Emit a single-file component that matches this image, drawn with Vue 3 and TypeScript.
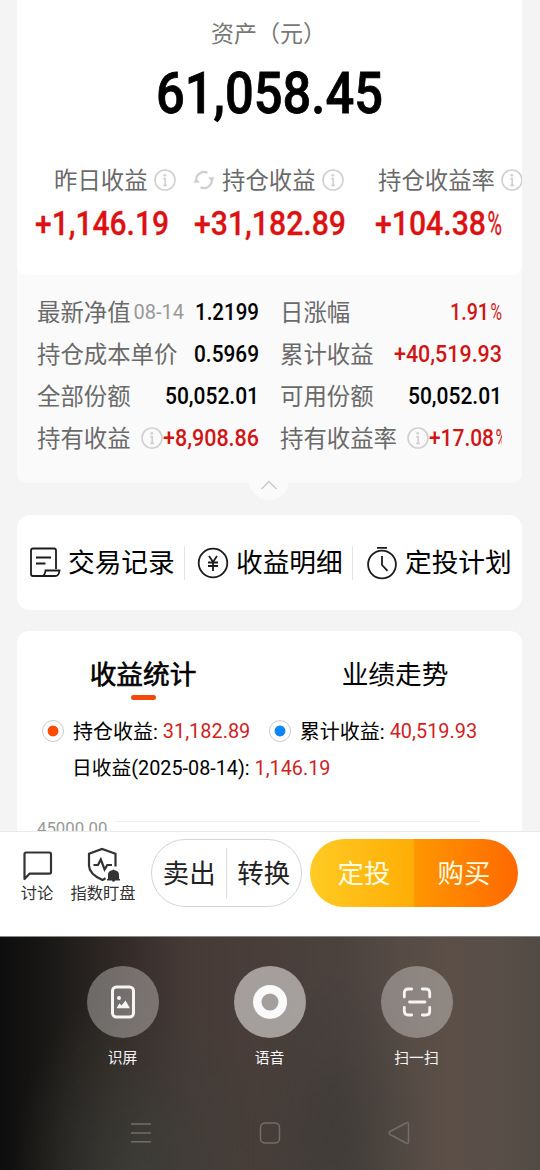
<script setup lang="ts">
import { h, type FunctionalComponent } from 'vue'

interface FigureProps {
  text: string
  w: number
  size: number
  pct?: number
}

// Condensed figure: digits are fitted to a fixed width, with an optional narrow percent sign.
const Figure: FunctionalComponent<FigureProps> = (p) => {
  const pct = p.pct ?? 0
  const height = Math.round(p.size * 1.1)
  const y = p.size * 0.82 + 1
  const parts = [
    h('text', { x: 0, y, textLength: p.w - (pct ? 1 : 0), lengthAdjust: 'spacingAndGlyphs' }, p.text),
  ]
  if (pct) {
    parts.push(
      h('text', { x: p.w + 0.5, y, textLength: pct - 0.5, lengthAdjust: 'spacingAndGlyphs', 'font-weight': 400 }, '%'),
    )
  }
  return h('svg', { width: p.w + pct, height, 'font-size': p.size, 'font-weight': 500 }, parts)
}
Figure.props = ['text', 'w', 'size', 'pct']

const InfoIcon: FunctionalComponent = () =>
  h('svg', { width: 22, height: 22, viewBox: '0 0 22 22', fill: 'none', stroke: '#d0d0d0' }, [
    h('circle', { cx: 11, cy: 11, r: 10, 'stroke-width': 1.6 }),
    h('path', { d: 'M9.4 9.6h1.8v6.900M9.2 16.300h3.800', 'stroke-width': 1.7 }),
    h('circle', { cx: 10.8, cy: 6.3, r: 1.4, fill: '#d0d0d0', stroke: 'none' }),
  ])

interface Detail {
  label: string
  date?: string
  info?: boolean
  red?: boolean
  text: string
  w: number
  pct?: number
}

const stats = [
  { cls: 'first', label: '昨日收益', text: '+1,146.19', w: 134, pct: 0 },
  { cls: 'second', label: '持仓收益', text: '+31,182.89', w: 152, pct: 0, refresh: true },
  { cls: 'third', label: '持仓收益率', text: '+104.38', w: 112, pct: 15 },
]

const details: Detail[] = [
  { label: '最新净值', date: '08-14', text: '1.2199', w: 64 },
  { label: '日涨幅', text: '1.91', w: 40, pct: 12, red: true },
  { label: '持仓成本单价', text: '0.5969', w: 65 },
  { label: '累计收益', text: '+40,519.93', w: 108, red: true },
  { label: '全部份额', text: '50,052.01', w: 94 },
  { label: '可用份额', text: '50,052.01', w: 94 },
  { label: '持有收益', text: '+8,908.86', w: 96, red: true, info: true },
  { label: '持有收益率', text: '+17.08', w: 66, pct: 12, red: true, info: true },
]
</script>

<template>
  <div class="screen">
    <main class="content">
      <section class="asset">
        <div class="summary">
          <div class="asset-title">资产（元）</div>
          <Figure class="total" text="61,058.45" :w="227" :size="57" />
          <div class="stats">
            <div v-for="s in stats" :key="s.label" class="stat" :class="s.cls">
              <div class="stat-label">
                <svg v-if="s.refresh" class="refresh" width="22" height="20" viewBox="0 0 22 20">
                  <path d="M3.3 11.5A8 8 0 0 1 14.5 2.7M18.7 8.5A8 8 0 0 1 7.5 17.3" fill="none" stroke="#cfcfcf" stroke-width="2.2" />
                  <path d="M0 12.4 3.4 8.4 7 12.8ZM15 7.2 22 7.6 18.6 11.6Z" fill="#cfcfcf" />
                </svg>
                <span>{{ s.label }}</span>
                <InfoIcon class="info" />
              </div>
              <Figure class="stat-value" :text="s.text" :w="s.w" :pct="s.pct" :size="34" />
            </div>
          </div>
        </div>
        <div class="details">
          <div v-for="d in details" :key="d.label" class="detail">
            <span class="detail-label">{{ d.label }}</span>
            <span v-if="d.date" class="date">{{ d.date }}</span>
            <InfoIcon v-if="d.info" class="detail-info" />
            <Figure class="detail-value" :class="{ red: d.red, tight: d.info }" :text="d.text" :w="d.w" :pct="d.pct" :size="23" />
          </div>
        </div>
        <div class="collapse">
          <svg width="18" height="10" viewBox="0 0 18 10"><path d="M1.5 9 9 1.5 16.5 9" fill="none" stroke="#c8c8c8" stroke-width="1.400" /></svg>
        </div>
      </section>

      <nav class="links">
        <div class="link l1">
          <svg width="32" height="32" viewBox="0 0 32 32" fill="none" stroke="#1c1c1c" stroke-width="1.8">
            <path d="M27 22V3.500Q27 1.500 25 1.500H4Q2 1.500 2 3.500V27Q2 29 4 29H26Q30 29 30.500 23.500H16.500Q16 29 12.500 29" />
            <path d="M7 10.500h15M7 16.500h9.500" />
          </svg>
          <span>交易记录</span>
        </div>
        <div class="link l2">
          <svg width="32" height="32" viewBox="0 0 32 32" fill="none" stroke="#1c1c1c" stroke-width="1.8">
            <circle cx="16" cy="16" r="14.300" />
            <path d="M12 9 16 15 20 9M16 15V24M11 15.500h10M11 19h10" stroke-width="1.800" />
          </svg>
          <span>收益明细</span>
        </div>
        <div class="link l3">
          <svg width="32" height="34" viewBox="0 0 32 34" fill="none" stroke="#1c1c1c" stroke-width="1.800">
            <circle cx="16" cy="18.500" r="13.900" />
            <path d="M11 1.800h10M16 10V19L21.500 24.800" />
          </svg>
          <span>定投计划</span>
        </div>
      </nav>

      <section class="chart">
        <div class="tabs">
          <div class="tab active">收益统计</div>
          <div class="tab">业绩走势</div>
        </div>
        <div class="legend">
          <span class="radio orange"></span>
          <span class="name">持仓收益:</span>
          <span class="num">31,182.89</span>
          <span class="radio blue"></span>
          <span class="name">累计收益:</span>
          <span class="num">40,519.93</span>
        </div>
        <div class="daily">日收益(2025-08-14): <span class="num">1,146.19</span></div>
        <div class="axis"><span>45000.00</span><i></i></div>
      </section>
    </main>

    <footer class="actions">
      <div class="tool discuss">
        <svg width="32" height="32" viewBox="0 0 32 32" fill="none" stroke="#333" stroke-width="2.200">
          <path d="M3.500 30V5.200Q3.500 3.500 5.200 3.500H28.300Q30 3.500 30 5.200V23Q30 24.700 28.300 24.700H8.500Z" stroke-linejoin="round" />
        </svg>
        <span>讨论</span>
      </div>
      <div class="tool watch">
        <svg width="34" height="36" viewBox="0 0 34 36" fill="none" stroke="#333" stroke-width="2.200">
          <path d="M29.500 19.500V6.800L16 2 3 6.800V18.500Q3 27 16.500 33L19.500 31.300" />
          <path d="M7.500 18H12L14.800 12.500 18.600 22.500 21.300 18H26" stroke-width="2.200" />
          <path d="M22 32V28Q22 23.800 26.300 23.300Q27.500 21.500 28.700 23.300Q33 23.800 33 28V32H34V33.500H29.200Q27.500 36 25.800 33.500H21V32Z" fill="#333" stroke="none" />
        </svg>
        <span>指数盯盘</span>
      </div>
      <div class="pill outline">
        <span>卖出</span><i></i><span>转换</span>
      </div>
      <div class="pill solid">
        <span class="invest">定投</span><span class="buy">购买</span>
      </div>
    </footer>

    <aside class="assistant">
      <div class="shortcuts">
        <div class="shortcut">
          <div class="disc">
            <svg width="26" height="34" viewBox="0 0 26 34">
              <rect x="2.500" y="2" width="21" height="30" rx="4" fill="none" stroke="#f5f5f5" stroke-width="3" />
              <circle cx="9" cy="13" r="2" fill="#f5f5f5" />
              <path d="M6.500 23.300 9.500 18.300 11.500 20.500 15.500 15.500 20 23.300Z" fill="#f5f5f5" />
            </svg>
          </div>
          <span>识屏</span>
        </div>
        <div class="shortcut">
          <div class="disc bright">
            <svg width="36" height="36" viewBox="0 0 36 36"><circle cx="18" cy="18" r="12.800" fill="none" stroke="#fafafa" stroke-width="8.500" /></svg>
          </div>
          <span>语音</span>
        </div>
        <div class="shortcut">
          <div class="disc">
            <svg width="30" height="30" viewBox="0 0 30 30" fill="none" stroke="#f5f5f5" stroke-width="2.800" stroke-linecap="round">
              <path d="M2.300 10V5.800Q2.300 2 6.100 2H9.700M20.300 2H23.900Q27.700 2 27.700 5.800V10M27.700 20.500V24.200Q27.700 28 23.900 28H20.300M9.700 28H6.100Q2.300 28 2.300 24.200V20.500M7.500 15H23" />
            </svg>
          </div>
          <span>扫一扫</span>
        </div>
      </div>
      <div class="system">
        <svg width="22" height="22" viewBox="0 0 22 22"><path d="M1 2h20M1 11h20M1 19.800h20" /></svg>
        <svg width="22" height="22" viewBox="0 0 22 22"><rect x="1.500" y="1" width="19" height="20" rx="4.500" /></svg>
        <svg width="24" height="24" viewBox="0 0 24 24"><path d="M19 2Q21.500 0.700 21.500 3.500V20.500Q21.500 23.300 19 22L3 13.500Q1 12 3 10.500Z" /></svg>
      </div>
    </aside>
  </div>
</template>

<style>
body {
  margin: 0;
}
</style>

<style scoped>
.screen {
  width: 540px;
  height: 1170px;
  overflow: hidden;
  background: #f4f4f4;
  display: flex;
  flex-direction: column;
  font-family: Roboto, 'Noto Sans CJK SC', sans-serif;
  color: #000;
}
svg {
  display: block;
  flex: none;
}
.screen span {
  white-space: nowrap;
}
.content {
  height: 831px;
  flex: none;
  overflow: hidden;
  padding: 0 18px 0 17px;
}
.asset {
  height: 483px;
  background: #fafafa;
  border-radius: 0 0 10px 10px;
  position: relative;
}
.summary {
  height: 275px;
  background: #fff;
  border-radius: 0 0 10px 10px;
  overflow: hidden;
  display: flex;
  flex-direction: column;
}
.asset-title {
  margin-top: 19px;
  height: 32px;
  line-height: 32px;
  padding-left: 194px;
  font-size: 23px;
  color: #777;
}
.total {
  margin: 14px 0 0 139px;
  fill: #000;
  stroke: #000;
  stroke-width: 0.800px;
  overflow: visible;
}
.stats {
  display: flex;
  margin: 37px 0 0 17px;
}
.stat {
  flex: none;
}
.stat.first {
  width: 159px;
}
.stat.second {
  width: 181px;
}
.stat-label {
  display: flex;
  align-items: center;
  height: 32px;
  font-size: 23.400px;
  line-height: 32px;
  color: #6a6a6a;
}
.first .stat-label {
  padding-left: 20px;
}
.third .stat-label {
  padding-left: 4px;
}
.refresh {
  margin: 0 7px 3px 0;
}
.info {
  margin: 0 0 2px 6px;
}
.stat-value {
  margin: 9px 0 0 1px;
  fill: #dc1212;
  stroke: #dc1212;
  stroke-width: 0.300px;
  overflow: visible;
}
.details {
  display: grid;
  grid-template-columns: 222px 222px;
  column-gap: 21px;
  grid-auto-rows: 42px;
  padding: 16px 0 0 20px;
}
.detail {
  display: flex;
  align-items: center;
  overflow: hidden;
}
.detail-label {
  font-size: 23.400px;
  color: #6a6a6a;
  margin-top: -2px;
}
.date {
  font-size: 20px;
  color: #999;
  margin-left: 3px;
}
.detail-info {
  margin: 0 0 1px 10px;
}
.detail-value {
  margin-left: auto;
  fill: #000;
  overflow: visible;
}
.detail-value.tight {
  margin-left: 0;
}
.detail-value.red {
  fill: #d01515;
}
.collapse {
  position: absolute;
  left: 232px;
  top: 460px;
  width: 40px;
  height: 40px;
  border-radius: 50%;
  background: #fafafa;
  display: flex;
  justify-content: center;
  align-items: center;
}
.collapse svg {
  margin-top: 9px;
}
.links {
  margin-top: 32px;
  height: 95px;
  border-radius: 13px;
  background: #fff;
  display: flex;
  align-items: center;
}
.link {
  height: 34px;
  display: flex;
  align-items: center;
  gap: 7px;
  font-size: 26.700px;
  line-height: 34px;
}
.l1 {
  width: 155px;
  padding-left: 12px;
}
.l2 {
  width: 155px;
  padding-left: 12px;
  border-left: 1px solid #e4e4e4;
}
.l3 {
  padding-left: 13px;
  border-left: 1px solid #e4e4e4;
}
.link span {
  padding-top: 1px;
}
.chart {
  margin-top: 21px;
  height: 260px;
  background: #fff;
  border-radius: 12px 12px 0 0;
}
.tabs {
  display: flex;
  height: 72px;
}
.tab {
  width: 252px;
  padding-top: 25px;
  line-height: 38px;
  font-size: 26.700px;
  text-align: center;
}
.tab.active {
  -webkit-text-stroke: 0.600px #000;
}
.tab.active::after {
  content: '';
  display: block;
  width: 25px;
  height: 5px;
  border-radius: 3px;
  margin: 1px auto 0;
  background: #f24a0c;
}
.legend {
  display: flex;
  align-items: center;
  height: 36px;
  margin-top: 10px;
  padding-left: 25px;
  font-size: 20px;
}
.name {
  margin-top: -2px;
}
.radio {
  width: 20px;
  height: 20px;
  flex: none;
  border: 1px solid #ccc;
  border-radius: 50%;
  margin-right: 9px;
}
.orange {
  background: radial-gradient(circle, #fa4c06 5px, #fff 5.800px);
}
.blue {
  background: radial-gradient(circle, #0c87f5 5px, #fff 5.800px);
  margin-left: 18px;
}
.num {
  color: #d01f1f;
}
.legend .num {
  margin-left: 5px;
  width: 88px;
  font-size: 19.900px;
}
.daily {
  height: 36px;
  line-height: 36px;
  margin-top: 2px;
  padding-left: 55px;
  font-size: 19.800px;
}
.axis {
  display: flex;
  align-items: center;
  height: 20px;
  margin-top: 31px;
  padding-left: 20px;
  font-size: 16.800px;
  color: #999;
  gap: 8px;
}
.axis i {
  width: 365px;
  height: 1px;
  background: #f0f0f0;
  margin-bottom: 13px;
}
.actions {
  height: 105px;
  flex: none;
  box-sizing: border-box;
  border-top: 1px solid #e9e9e9;
  background: #fff;
  display: flex;
  align-items: flex-start;
}
.tool {
  display: flex;
  flex-direction: column;
  align-items: center;
  font-size: 16.300px;
  line-height: 20px;
  color: #333;
}
.discuss {
  width: 34px;
  margin: 17px 0 0 20px;
}
.discuss span {
  margin-top: 3px;
}
.watch {
  width: 66px;
  margin: 15px 0 0 16px;
}
.watch span {
  margin-top: 1px;
}
.pill {
  height: 68px;
  margin-top: 7px;
  box-sizing: border-box;
  border-radius: 34px;
  display: flex;
  align-items: center;
  font-size: 26.400px;
  overflow: hidden;
}
.pill span {
  flex: 1;
  box-sizing: border-box;
  text-align: center;
  height: 68px;
  line-height: 70px;
}
.outline {
  width: 151px;
  margin-left: 15px;
  border: 1px solid #d5d5d5;
  color: #222;
}
.outline i {
  width: 1px;
  height: 50px;
  margin-left: -1px;
  background: #ddd;
}
.solid {
  width: 208px;
  margin-left: 8px;
  color: #fffbe0;
}
.invest {
  background: linear-gradient(90deg, #ffcb24, #ffad05);
  padding-left: 4px;
}
.buy {
  background: linear-gradient(90deg, #ff9700, #ff6900);
  padding-right: 4px;
}
.assistant {
  flex: 1;
  box-sizing: border-box;
  border-top: 1px solid #8b8885;
  background:
    radial-gradient(ellipse 130px 190px at 140px 240px, rgba(62, 64, 58, 0.800), transparent),
    radial-gradient(ellipse 90px 170px at 335px 200px, rgba(60, 58, 54, 0.700), transparent),
    linear-gradient(90deg, #0d0d0d 0, #171614 40px, #26221f 85px, #3a302d 145px, #463b37 190px, #493e39 270px, #4b423e 340px, #564b45 400px, #5b4f47 450px, #594f49 500px, #524a44 540px);
}
.shortcuts {
  display: flex;
  padding: 29px 50px 0 49px;
}
.shortcut {
  width: 147px;
  display: flex;
  flex-direction: column;
  align-items: center;
  font-size: 14.800px;
  line-height: 20px;
  color: #f5f5f5;
}
.shortcut span {
  margin-top: 10px;
}
.disc {
  width: 72px;
  height: 72px;
  border-radius: 50%;
  background: rgba(255, 255, 255, 0.320);
  display: flex;
  align-items: center;
  justify-content: center;
}
.disc.bright {
  background: rgba(255, 255, 255, 0.500);
}
.system {
  display: flex;
  justify-content: space-between;
  align-items: center;
  height: 24px;
  margin-top: 53px;
  padding: 0 129px 0 130px;
}
.system svg {
  fill: none;
  stroke: #736c67;
  stroke-width: 1.500;
}
</style>
